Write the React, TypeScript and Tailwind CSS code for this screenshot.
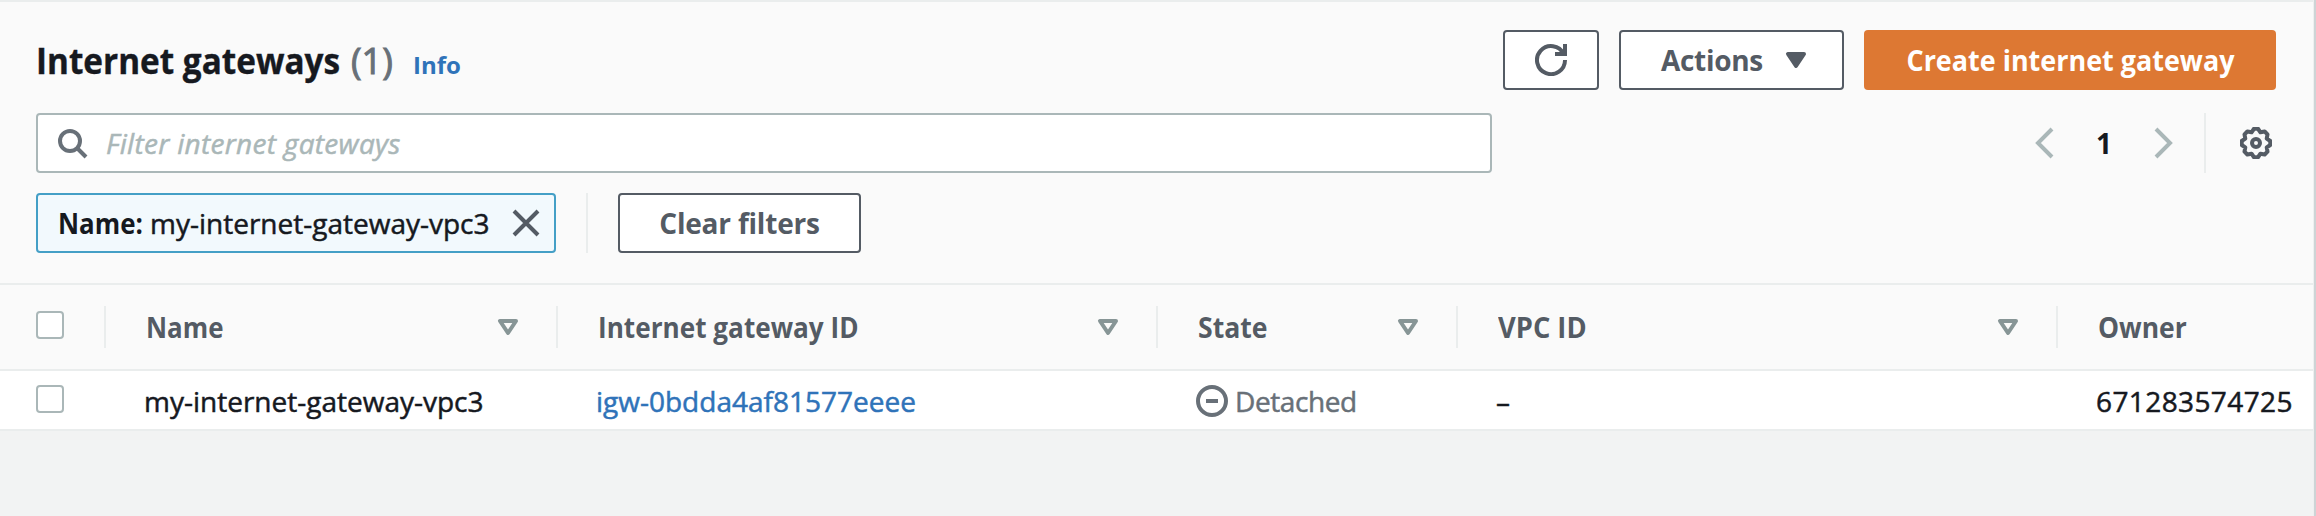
import type { ReactNode } from 'react';

function Icon({ children, className = '' }: { children: ReactNode; className?: string }) {
  return (
    <svg viewBox="0 0 16 16" className={`h-8 w-8 shrink-0 fill-none stroke-current stroke-2 ${className}`}>
      {children}
    </svg>
  );
}

const gearPoints = Array.from({ length: 8 }, (_, k) =>
  [
    [-8, 7.2],
    [8, 7.2],
    [22.5, 5.8],
  ].map(([offset, radius]) => {
    const angle = ((k * 45 + offset) * Math.PI) / 180;
    return `${(8 + radius * Math.sin(angle)).toFixed(2)},${(8 - radius * Math.cos(angle)).toFixed(2)}`;
  }),
)
  .flat()
  .join(' ');

function SortIcon() {
  return (
    <Icon className="text-[#879596]">
      <path d="M4 5h8l-4 6z" strokeLinejoin="round" />
    </Icon>
  );
}

function Checkbox({ label }: { label: string }) {
  return (
    <button
      type="button"
      role="checkbox"
      aria-checked="false"
      aria-label={label}
      className="block h-7 w-7 rounded-[4px] border-2 border-[#aab7b8] bg-white"
    />
  );
}

function HeaderCell({ width, children, sortable = true }: { width: string; children: ReactNode; sortable?: boolean }) {
  return (
    <div className={`flex h-[84px] shrink-0 items-center ${width}`}>
      <div className="-mt-[1px] h-[42px] w-[2px] shrink-0 bg-[#eaeded]" />
      <div className="flex flex-1 items-center justify-between pr-[32px] pl-[40px] font-bold text-[#545b64]">
        {children}
        {sortable && <SortIcon />}
      </div>
    </div>
  );
}

export default function App() {
  return (
    <div className="flex h-[516px] w-[2316px] overflow-hidden bg-[#f2f3f3] font-['Open_Sans','Noto_Sans',sans-serif] text-[28px] leading-9 whitespace-nowrap text-[#16191f]">
      <main className="w-[2313px] shrink-0">
        <section className="border-y-2 border-[#eaeded] bg-[#fafafa] px-9 pt-[28px] pb-[30px]">
          <header className="flex h-[60px] items-center justify-between pr-[1px]">
            <div className="flex items-baseline pt-[5px] leading-[48px]">
              <h1 className="w-[313px] origin-left scale-x-[0.925] text-[36px] font-bold [-webkit-text-stroke:0.4px]">Internet gateways</h1>
              <span className="w-[64px] pl-[2px] text-[36px] text-[#687078] [-webkit-text-stroke:1px]">(1)</span>
              <a className="text-[24px] font-bold text-[#2f73b9]">Info</a>
            </div>
            <div className="flex gap-5 font-bold text-[#545b64]">
              <button type="button" aria-label="Refresh" className="flex h-[60px] w-24 items-center justify-center rounded-[4px] border-2 border-[#545b64] bg-white">
                <Icon>
                  <path d="M10 5h5V0" />
                  <path d="M15 8a7 7 0 1 1-.7-3" />
                </Icon>
              </button>
              <button type="button" className="flex h-[60px] w-[225px] items-center justify-between rounded-[4px] border-2 border-[#545b64] bg-white pr-[30px] pl-10">
                <span className="tracking-[-0.3px]">Actions</span>
                <Icon>
                  <path d="M4 5h8l-4 6z" strokeLinejoin="round" className="fill-current" />
                </Icon>
              </button>
              <button type="button" className="h-[60px] w-[412px] rounded-[4px] bg-[#dd7833] text-center text-white">
                <span className="inline-block scale-x-[0.962]">Create internet gateway</span>
              </button>
            </div>
          </header>

          <div className="mt-[23px] flex h-[60px] items-center justify-between">
            <div className="flex h-[60px] w-[1456px] items-center rounded-[4px] border-2 border-[#aab7b8] bg-white pl-[18px]">
              <Icon className="text-[#687078]">
                <circle cx="7" cy="7" r="5" />
                <path d="m15 15-4.5-4.5" />
              </Icon>
              <span className="pl-[18px] tracking-[0.3px] text-[#aab7b8] italic [-webkit-text-stroke:0.5px]">Filter internet gateways</span>
            </div>
            <div className="flex h-[60px] items-center pr-[5px]">
              <Icon className="text-[#aab7b8]">
                <path d="M12 1 5 8l7 7" />
              </Icon>
              <span className="w-[88px] text-center font-bold">1</span>
              <Icon className="text-[#aab7b8]">
                <path d="m4 1 7 7-7 7" />
              </Icon>
              <div className="mr-[34px] ml-6 h-[60px] w-[2px] bg-[#eaeded]" />
              <Icon className="text-[#545b64]">
                <polygon points={gearPoints} strokeLinejoin="round" />
                <circle cx="8" cy="8" r="2" />
              </Icon>
            </div>
          </div>

          <div className="mt-5 flex h-[60px] items-center">
            <div className="flex h-[60px] w-[520px] items-center rounded-[4px] border-2 border-[#449fc6] bg-[#f2f9fd] pl-5">
              <span className="w-[91px] origin-left scale-x-[0.925] font-bold">Name:</span>
              <span className="w-[361px] pl-[1px] [-webkit-text-stroke:0.5px]">my-internet-gateway-vpc3</span>
              <Icon className="text-[#545b64]">
                <path d="m2 2 12 12M14 2 2 14" />
              </Icon>
            </div>
            <div className="mr-[30px] ml-[30px] h-[60px] w-[2px] bg-[#eaeded]" />
            <button type="button" className="h-[60px] w-[243px] rounded-[4px] border-2 border-[#545b64] bg-white text-center font-bold tracking-[-0.2px] text-[#545b64]">
              Clear filters
            </button>
          </div>
        </section>

        <div className="flex h-[86px] overflow-hidden border-b-2 border-[#eaeded] bg-[#fafafa]">
          <div className="w-[104px] shrink-0 pt-[26px] pl-9">
            <Checkbox label="Select all" />
          </div>
          <HeaderCell width="w-[452px]">
            <span className="origin-left scale-x-[0.925]">Name</span>
          </HeaderCell>
          <HeaderCell width="w-[600px]">
            <span className="origin-left scale-x-[0.934]">Internet gateway ID</span>
          </HeaderCell>
          <HeaderCell width="w-[300px]">
            <span className="origin-left scale-x-[0.95]">State</span>
          </HeaderCell>
          <HeaderCell width="w-[600px]">
            <span className="origin-left scale-x-[0.975]">VPC ID</span>
          </HeaderCell>
          <HeaderCell width="w-[257px]" sortable={false}>
            <span className="origin-left scale-x-[0.945]">Owner</span>
          </HeaderCell>
        </div>

        <div className="flex h-[60px] overflow-hidden border-b-2 border-[#eaeded] bg-white pt-[12px]">
          <div className="w-[144px] shrink-0 pt-[2px] pl-9">
            <Checkbox label="Select my-internet-gateway-vpc3" />
          </div>
          <span className="w-[452px] shrink-0 [-webkit-text-stroke:0.5px]">my-internet-gateway-vpc3</span>
          <a className="w-[600px] shrink-0 text-[#2f73b9] [-webkit-text-stroke:0.5px]">igw-0bdda4af81577eeee</a>
          <div className="flex w-[300px] shrink-0 items-start text-[#687078]">
            <Icon className="mt-[2px] mr-[7px]">
              <circle cx="8" cy="8" r="7" />
              <path d="M5 8h6" />
            </Icon>
            <span className="tracking-[-0.4px] [-webkit-text-stroke:0.5px]">Detached</span>
          </div>
          <span className="w-[600px] shrink-0 [-webkit-text-stroke:0.5px]">–</span>
          <span className="tracking-[0.4px] [-webkit-text-stroke:0.5px]">671283574725</span>
        </div>
      </main>
      <div className="w-[1px] bg-[#eef0f0]" />
      <div className="w-[2px] bg-[#cdd4d6]" />
    </div>
  );
}
